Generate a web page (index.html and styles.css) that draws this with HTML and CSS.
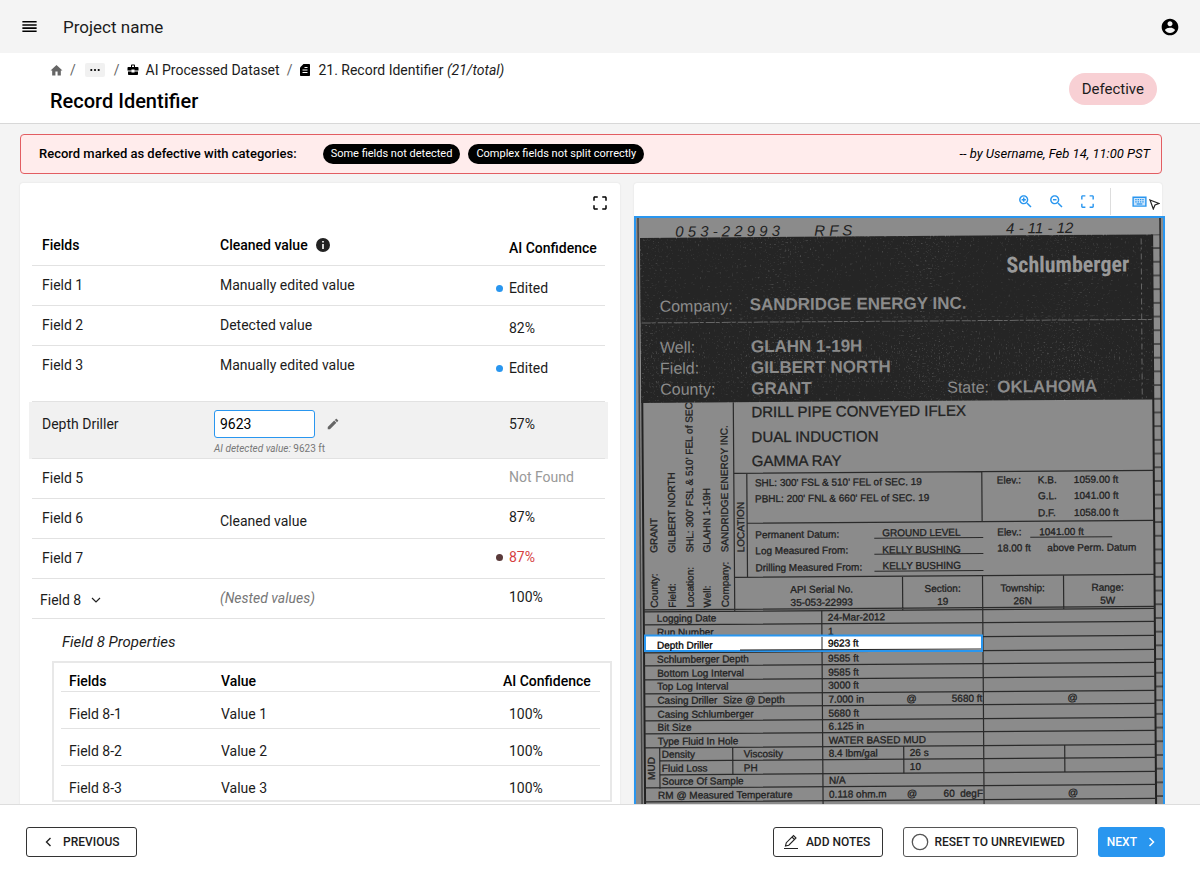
FILE: index.html
```html
<!DOCTYPE html>
<html lang="en">
<head>
    <meta charset="UTF-8">
    <meta name="viewport" content="width=device-width, initial-scale=1.0">
    <title>Record Identifier</title>
    <link rel="stylesheet" href="styles.css">
</head>
<body>
    <header class="topbar">
        <button class="icon-btn" aria-label="Menu">
            <svg width="19" height="19" viewBox="0 0 24 24"><path d="M3 15h18v-2H3v2zm0 4h18v-2H3v2zm0-8h18V9H3v2zm0-6v2h18V5H3z"/></svg>
        </button>
        <span class="project">Project name</span>
        <button class="icon-btn account" aria-label="Account">
            <svg width="20" height="20" viewBox="0 0 24 24"><path d="M12 2C6.480 2 2 6.480 2 12s4.480 10 10 10 10-4.480 10-10S17.520 2 12 2zm0 3c1.660 0 3 1.340 3 3s-1.340 3-3 3-3-1.340-3-3 1.340-3 3-3zm0 14.200c-2.500 0-4.710-1.280-6-3.220.030-1.990 4-3.080 6-3.080 1.990 0 5.970 1.090 6 3.080-1.290 1.940-3.500 3.220-6 3.220z"/></svg>
        </button>
    </header>

    <div class="subheader">
        <div>
            <nav class="breadcrumb" aria-label="Breadcrumb">
                <a href="#" aria-label="Home"><svg class="home" width="13" height="13" viewBox="0 0 24 24"><path d="M10 21v-7h4v7h6v-9h3L12 2 1 12h3v9z"/></svg></a>
                <span class="sep">/</span>
                <button class="more" aria-label="Show more">
                    <svg width="10" height="4" viewBox="0 0 10 4"><circle cx="1.300" cy="2" r="1.100"/><circle cx="5" cy="2" r="1.100"/><circle cx="8.700" cy="2" r="1.100"/></svg>
                </button>
                <span class="sep">/</span>
                <a href="#"><svg width="12" height="12" viewBox="0 0 24 24"><path d="M8 6V3c0-1 .8-2 2-2h4c1.200 0 2 1 2 2v3h5c1.100 0 2 .9 2 2v5h-8v-2H9v2H1V8c0-1.100.9-2 2-2zm2 0h4V3h-4zM2 15h7v2h6v-2h7v5c0 1.100-.9 2-2 2H4c-1.100 0-2-.9-2-2z"/></svg>AI Processed Dataset</a>
                <span class="sep">/</span>
                <a href="#"><svg width="12" height="14" viewBox="0 0 24 26"><path d="M9 1h11c1.100 0 2 .9 2 2v20c0 1.100-.9 2-2 2H4c-1.100 0-2-.9-2-2V8z"/><path d="M7 13h10M7 18h10M11 8h6" stroke="#fff" stroke-width="2"/></svg><span>21. Record Identifier <em>(21/total)</em></span></a>
            </nav>
            <h1>Record Identifier</h1>
        </div>
        <span class="status">Defective</span>
    </div>

    <main>
        <div class="alert">
            <strong>Record marked as defective with categories:</strong>
            <span class="chip">Some fields not detected</span>
            <span class="chip">Complex fields not split correctly</span>
            <em>-- by Username, Feb 14, 11:00 PST</em>
        </div>

        <div class="panels">
            <section class="panel">
                <div class="panel-top">
                    <button class="icon-btn" aria-label="Expand">
                        <svg width="18" height="18" viewBox="0 0 24 24"><path d="M3 5v4h2V5h4V3H5c-1.100 0-2 .9-2 2zm2 10H3v4c0 1.100.9 2 2 2h4v-2H5v-4zm14 4h-4v2h4c1.100 0 2-.9 2-2v-4h-2v4zm0-16h-4v2h4v4h2V5c0-1.100-.9-2-2-2z"/></svg>
                    </button>
                </div>

                <table class="fields">
                    <colgroup><col class="col-name"><col><col class="col-conf"></colgroup>
                    <thead>
                        <tr class="low">
                            <th>Fields</th>
                            <th>Cleaned value <svg class="info" width="16" height="16" viewBox="0 0 24 24"><circle cx="12" cy="12" r="10.500" fill="#222"/><path d="M10.800 6h2.400v2.400h-2.400zM10.800 10.500h2.400V18h-2.400z" fill="#fff"/></svg></th>
                            <th>AI Confidence</th>
                        </tr>
                    </thead>
                    <tbody>
                        <tr class="low"><td>Field 1</td><td>Manually edited value</td><td><i class="dot"></i>Edited</td></tr>
                        <tr class="low"><td>Field 2</td><td>Detected value</td><td>82%</td></tr>
                        <tr class="low last"><td>Field 3</td><td>Manually edited value</td><td><i class="dot"></i>Edited</td></tr>
                        <tr class="active">
                            <td><label for="depth">Depth Driller</label></td>
                            <td>
                                <div class="edit">
                                    <input type="text" id="depth" value="9623">
                                    <svg width="14" height="14" viewBox="0 0 24 24"><path d="M3 17.250V21h3.750L17.810 9.940l-3.750-3.750L3 17.250zM20.710 7.040c.39-.39.39-1.020 0-1.410l-2.340-2.340c-.39-.39-1.020-.39-1.410 0l-1.830 1.830 3.750 3.750 1.830-1.830z"/></svg>
                                </div>
                                <div class="hint"><em>AI detected value:</em> 9623 ft</div>
                            </td>
                            <td>57%</td>
                        </tr>
                        <tr><td>Field 5</td><td></td><td class="muted">Not Found</td></tr>
                        <tr><td>Field 6</td><td class="down">Cleaned value</td><td>87%</td></tr>
                        <tr><td>Field 7</td><td></td><td class="bad"><i class="dot"></i>87%</td></tr>
                        <tr>
                            <td class="nest"><button class="toggle" aria-expanded="true">Field 8 <svg width="10" height="8" viewBox="0 0 10 8"><path d="M1 2l4 4 4-4" fill="none" stroke="#222" stroke-width="1.200"/></svg></button></td>
                            <td class="nested-note">(Nested values)</td>
                            <td>100%</td>
                        </tr>
                    </tbody>
                </table>

                <h2>Field 8 Properties</h2>
                <div class="nested">
                    <table>
                        <colgroup><col class="col-sub"><col><col class="col-subconf"></colgroup>
                        <thead>
                            <tr><th>Fields</th><th>Value</th><th>AI Confidence</th></tr>
                        </thead>
                        <tbody>
                            <tr><td>Field 8-1</td><td>Value 1</td><td>100%</td></tr>
                            <tr><td>Field 8-2</td><td>Value 2</td><td>100%</td></tr>
                            <tr><td>Field 8-3</td><td>Value 3</td><td>100%</td></tr>
                        </tbody>
                    </table>
                </div>
            </section>

            <section class="panel viewer">
                <div class="tools">
                    <button class="icon-btn" aria-label="Zoom in"><svg width="17" height="17" viewBox="0 0 24 24"><path d="M15.500 14h-.79l-.28-.27C15.410 12.590 16 11.110 16 9.500 16 5.910 13.090 3 9.500 3S3 5.910 3 9.500 5.910 16 9.500 16c1.610 0 3.090-.59 4.230-1.570l.27.28v.79l5 4.990L20.490 19l-4.990-5zm-6 0C7.010 14 5 11.990 5 9.500S7.010 5 9.500 5 14 7.010 14 9.500 11.990 14 9.500 14z"/><path d="M12.500 10.500h-2v2h-2v-2h-2v-2h2v-2h2v2h2z"/></svg></button>
                    <button class="icon-btn" aria-label="Zoom out"><svg width="17" height="17" viewBox="0 0 24 24"><path d="M15.500 14h-.79l-.28-.27C15.410 12.590 16 11.110 16 9.500 16 5.910 13.090 3 9.500 3S3 5.910 3 9.500 5.910 16 9.500 16c1.610 0 3.090-.59 4.230-1.570l.27.28v.79l5 4.990L20.490 19l-4.990-5zm-6 0C7.010 14 5 11.990 5 9.500S7.010 5 9.500 5 14 7.010 14 9.500 11.990 14 9.500 14z"/><path d="M7 8.500h5v2H7z"/></svg></button>
                    <button class="icon-btn" aria-label="Fit"><svg width="17" height="17" viewBox="0 0 24 24"><path d="M3 5v4h2V5h4V3H5c-1.100 0-2 .9-2 2zm2 10H3v4c0 1.100.9 2 2 2h4v-2H5v-4zm14 4h-4v2h4c1.100 0 2-.9 2-2v-4h-2v4zm0-16h-4v2h4v4h2V5c0-1.100-.9-2-2-2z"/></svg></button>
                    <span class="divider"></span>
                    <button class="icon-btn keys" aria-label="Keyboard shortcuts">
                        <svg width="17" height="17" viewBox="0 0 24 24"><path d="M3 6h18v12.500H3z" fill="#cfe6fb" stroke="#2996ef" stroke-width="2"/><path d="M6 9.500h12M6 12.500h12" stroke="#2996ef" stroke-width="1.800" stroke-dasharray="2 1.300"/><path d="M8 15.500h8" stroke="#2996ef" stroke-width="1.800"/></svg>
                        <svg class="cursor" width="11" height="11" viewBox="0 0 11 11"><path d="M1 1l9 3.500-4 1.500-1.700 4z" fill="#fff" stroke="#222" stroke-width="1.200"/></svg>
                    </button>
                </div>

                <div class="scan">
                    <svg viewBox="636 218 527 590" role="img" aria-label="Scanned well log header">
                        <defs>
                            <filter id="grain" x="0" y="0" width="100%" height="100%">
                                <feTurbulence type="fractalNoise" baseFrequency="0.6" numOctaves="2" seed="4"/>
                                <feColorMatrix values="0 0 0 0 .5  0 0 0 0 .5  0 0 0 0 .5  5 0 0 0 -2.9"/>
                            </filter>
                            <pattern id="ticks" x="0" y="237" width="12" height="13.700" patternUnits="userSpaceOnUse">
                                <path d="M0 1h12" stroke="#222" stroke-width="1.200"/>
                            </pattern>
                        </defs>
                        <rect x="636" y="218" width="527" height="590" fill="#8b8b8b"/>

                        <g transform="rotate(-.4 636 218)">
                            <!-- page edges -->
                            <path d="M638 210v610" stroke="#444" stroke-width="1.500"/>
                            <path d="M641 238v580M1152 238v580" stroke="#222" stroke-width="2"/>
                            <path d="M1160 215v600" stroke="#222" stroke-width="1.500"/>
                            <rect x="1152" y="238" width="8" height="580" fill="url(#ticks)"/>

                            <!-- title block -->
                            <rect x="640" y="238" width="512" height="165" fill="#252525"/>
                            <rect x="640" y="238" width="512" height="165" filter="url(#grain)" opacity=".25"/>
                            <path d="M641 323h511" stroke="#666" stroke-width="1" stroke-dasharray="9 1 4 2"/>
                            <path d="M641 319h511M641 383h511" stroke="#555" stroke-width=".5" stroke-dasharray="3 4 1 6"/>
                            <path d="M1141 242v160" stroke="#666" stroke-width="1" stroke-dasharray="6 3 2 4"/>

                            <g class="hand">
                                <text x="675" y="237">0 5 3 - 2 2 9 9 3</text>
                                <text x="814" y="237">R F S</text>
                                <text x="1006" y="236">4 - 11 - 12</text>
                            </g>

                            <text class="brand" x="1006" y="275">Schlumberger</text>
                            <g class="label">
                                <text x="659" y="312">Company:</text>
                                <text x="659" y="353">Well:</text>
                                <text x="659" y="374">Field:</text>
                                <text x="659" y="395">County:</text>
                                <text x="946" y="395">State:</text>
                            </g>
                            <g class="value">
                                <text x="749" y="311">SANDRIDGE ENERGY INC.</text>
                                <text x="750" y="353">GLAHN 1-19H</text>
                                <text x="750" y="374">GILBERT NORTH</text>
                                <text x="750" y="395">GRANT</text>
                                <text x="996" y="395">OKLAHOMA</text>
                            </g>

                            <g class="service">
                                <text x="750" y="418">DRILL PIPE CONVEYED IFLEX</text>
                                <text x="750" y="443">DUAL INDUCTION</text>
                                <text x="750" y="467">GAMMA RAY</text>
                            </g>

                            <!-- rules -->
                            <path class="rule" d="M732 403v209M745 474v104M732 474h420M745 524h407M732 578h420M641 610h511M980 474v50M900 578v34M980 578v240M1061 578v34M819 612v206M656 748v41M729 748v27M900 748v27M1061 748v27"/>
                            <path class="rule" d="M641 612h511M641 625h511M641 639h511M641 653h511M641 666h511M641 680h511M641 694h511M641 707h511M641 721h511M641 734h511M641 748h511M656 761h496M656 775h496M641 788h511M641 802h511"/>
                            <path class="rule thin" d="M872 540h109M872 556h109M872 573h109M1028 540h82"/>

                            <g class="small">
                                <text transform="translate(655 608) rotate(-90)">County:</text>
                                <text transform="translate(673 608) rotate(-90)">Field:</text>
                                <text transform="translate(691 608) rotate(-90)">Location:</text>
                                <text transform="translate(708 608) rotate(-90)">Well:</text>
                                <text transform="translate(726 608) rotate(-90)">Company:</text>
                                <text transform="translate(655 553) rotate(-90)">GRANT</text>
                                <text transform="translate(673 553) rotate(-90)">GILBERT NORTH</text>
                                <text transform="translate(691 553) rotate(-90)">SHL: 300' FSL &amp; 510' FEL of SEC</text>
                                <text transform="translate(708 553) rotate(-90)">GLAHN 1-19H</text>
                                <text transform="translate(726 553) rotate(-90)">SANDRIDGE ENERGY INC.</text>
                                <text transform="translate(742 553) rotate(-90)">LOCATION</text>

                                <text x="753" y="487">SHL: 300' FSL &amp; 510' FEL of SEC. 19</text>
                                <text x="753" y="503">PBHL: 200' FNL &amp; 660' FEL of SEC. 19</text>
                                <text x="753" y="539">Permanent Datum:</text>
                                <text x="753" y="555">Log Measured From:</text>
                                <text x="753" y="572">Drilling Measured From:</text>
                                <text x="880" y="538">GROUND LEVEL</text>
                                <text x="880" y="555">KELLY BUSHING</text>
                                <text x="880" y="571">KELLY BUSHING</text>
                                <text x="995" y="486">Elev.:</text>
                                <text x="1036" y="486">K.B.</text>
                                <text x="1036" y="502">G.L.</text>
                                <text x="1036" y="519">D.F.</text>
                                <text x="1072" y="486">1059.00 ft</text>
                                <text x="1072" y="502">1041.00 ft</text>
                                <text x="1072" y="519">1058.00 ft</text>
                                <text x="995" y="538">Elev.:</text>
                                <text x="1037" y="538">1041.00 ft</text>
                                <text x="995" y="554">18.00 ft</text>
                                <text x="1045" y="554">above Perm. Datum</text>

                                <g text-anchor="middle">
                                    <text x="819" y="594">API Serial No.</text>
                                    <text x="819" y="607">35-053-22993</text>
                                    <text x="940" y="594">Section:</text>
                                    <text x="940" y="607">19</text>
                                    <text x="1020" y="594">Township:</text>
                                    <text x="1020" y="607">26N</text>
                                    <text x="1105" y="594">Range:</text>
                                    <text x="1105" y="607">5W</text>
                                </g>

                                <text x="654" y="622">Logging Date</text>
                                <text x="825" y="622">24-Mar-2012</text>
                                <text x="654" y="636">Run Number</text>
                                <text x="825" y="636">1</text>
                                <text x="654" y="663">Schlumberger Depth</text>
                                <text x="825" y="663">9585 ft</text>
                                <text x="654" y="677">Bottom Log Interval</text>
                                <text x="825" y="677">9585 ft</text>
                                <text x="654" y="690">Top Log Interval</text>
                                <text x="825" y="690">3000 ft</text>
                                <text x="654" y="704">Casing Driller&#160; Size @ Depth</text>
                                <text x="825" y="704">7.000 in</text>
                                <text x="903" y="704">@</text>
                                <text x="979" y="704" text-anchor="end">5680 ft</text>
                                <text x="1064" y="704">@</text>
                                <text x="654" y="718">Casing Schlumberger</text>
                                <text x="825" y="718">5680 ft</text>
                                <text x="654" y="731">Bit Size</text>
                                <text x="825" y="731">6.125 in</text>
                                <text x="654" y="745">Type Fluid In Hole</text>
                                <text x="825" y="745">WATER BASED MUD</text>
                                <text transform="translate(651 780) rotate(-90)">MUD</text>
                                <text x="658" y="758">Density</text>
                                <text x="740" y="758">Viscosity</text>
                                <text x="825" y="758">8.4 lbm/gal</text>
                                <text x="906" y="758">26 s</text>
                                <text x="658" y="772">Fluid Loss</text>
                                <text x="740" y="772">PH</text>
                                <text x="906" y="772">10</text>
                                <text x="658" y="785">Source Of Sample</text>
                                <text x="825" y="785">N/A</text>
                                <text x="654" y="799">RM @ Measured Temperature</text>
                                <text x="825" y="799">0.118 ohm.m</text>
                                <text x="903" y="799">@</text>
                                <text x="979" y="799" text-anchor="end">60&#160; degF</text>
                                <text x="1064" y="799">@</text>
                            </g>
                        </g>

                        <!-- selected field -->
                        <rect x="645" y="635.500" width="337" height="15.500" fill="#fff" stroke="#2996ef" stroke-width="2"/>
                        <path d="M822 637v13M740 650l241-1" stroke="#222" stroke-width="1"/>
                        <g class="small picked" transform="rotate(-.4 636 218)">
                            <text x="654" y="649">Depth Driller</text>
                            <text x="825" y="648">9623 ft</text>
                        </g>
                    </svg>
                </div>
            </section>
        </div>
    </main>

    <footer>
        <button class="btn">
            <svg width="7" height="10" viewBox="0 0 7 10"><path d="M5.500 1L1.500 5l4 4" fill="none" stroke="#222" stroke-width="1.400"/></svg>
            PREVIOUS
        </button>
        <button class="btn notes">
            <svg width="16" height="16" viewBox="0 0 16 16" fill="none" stroke="#222" stroke-width="1.100"><path d="M1 14.500h14M2.500 12l.8-3.300L10.500 1.500l2.500 2.500-7.200 7.200zM9 3l2.500 2.500"/></svg>
            ADD NOTES
        </button>
        <button class="btn reset">
            <svg width="18" height="18" viewBox="0 0 18 18"><circle cx="9" cy="9" r="7.700" fill="none" stroke="#555" stroke-width="1.300"/></svg>
            RESET TO UNREVIEWED
        </button>
        <button class="btn next">
            NEXT
            <svg width="7" height="10" viewBox="0 0 7 10"><path d="M1.500 1l4 4-4 4" fill="none" stroke="#fff" stroke-width="1.500"/></svg>
        </button>
    </footer>
</body>
</html>
```

FILE: styles.css
```css
* {
    box-sizing: border-box;
}
body {
    font-family: Roboto, Arial, sans-serif;
    font-size: 14px;
    line-height: 20px;
    color: #1c1c1c;
    background-color: #f4f4f4;
    margin: 0;
    height: 100vh;
    display: flex;
    flex-direction: column;
    overflow: hidden;
}
button {
    font-family: inherit;
    color: inherit;
    cursor: pointer;
}
a {
    color: inherit;
    text-decoration: none;
}
svg {
    display: block;
}
.icon-btn {
    display: flex;
    padding: 0;
    border: none;
    background: none;
}

/* header */
.topbar {
    display: flex;
    align-items: center;
    flex: none;
    height: 53px;
    padding: 0 20px;
}
.project {
    margin-left: 24px;
    font-size: 17px;
}
.account {
    margin-left: auto;
}
.subheader {
    display: flex;
    flex: none;
    justify-content: space-between;
    align-items: center;
    padding: 7px 43px 10px 50px;
    background-color: #fff;
    border-bottom: 1px solid #d8d8d8;
}
.breadcrumb {
    display: flex;
    align-items: center;
    gap: 7px;
}
.breadcrumb a {
    display: flex;
    align-items: center;
    gap: 7px;
}
.breadcrumb .home {
    fill: #666;
}
.sep {
    color: #666;
}
.more {
    display: flex;
    align-items: center;
    justify-content: center;
    width: 20px;
    height: 14px;
    margin: 0 2px;
    padding: 0;
    border: none;
    border-radius: 2px;
    background-color: #f1f1f1;
}
h1 {
    margin: 9px 0 0;
    font-size: 20px;
    line-height: 24px;
    font-weight: 500;
    color: #000;
}
.status {
    margin-top: 4px;
    padding: 6px 13px;
    border-radius: 16px;
    background-color: #f8d0d4;
    font-size: 15px;
}

/* main */
main {
    flex: 1;
    min-height: 0;
    display: flex;
    flex-direction: column;
    padding: 10px 38px 0 20px;
    overflow: hidden;
}
.alert {
    display: flex;
    align-items: center;
    flex: none;
    gap: 8px;
    height: 40px;
    padding: 0 11px 0 18px;
    border: 1px solid #e25d62;
    border-radius: 4px;
    background-color: #ffecec;
    color: #000;
    font-size: 13px;
}
.alert strong {
    margin-right: 18px;
    font-weight: 500;
}
.alert em {
    margin-left: auto;
}
.chip {
    padding: 0 8px;
    border-radius: 10px;
    background-color: #000;
    color: #fff;
    font-size: 11px;
}
.panels {
    flex: 1;
    min-height: 0;
    display: grid;
    grid-template-columns: 600fr 528fr;
    gap: 14px;
    margin-top: 9px;
}
.panel {
    min-width: 0;
    border-radius: 3px 3px 0 0;
    background-color: #fff;
    box-shadow: 0 0 2px rgba(0, 0, 0, 0.1);
}
.panel-top {
    display: flex;
    justify-content: flex-end;
    padding: 11px 11px 14px;
}

/* tables */
table {
    width: 100%;
    table-layout: fixed;
    border-collapse: separate;
    border-spacing: 0;
}
th, td {
    padding: 0;
    text-align: left;
    vertical-align: top;
    border-bottom: 1px solid #e2e2e2;
}
th {
    font-weight: 500;
    color: #000;
}
.fields {
    width: calc(100% - 27px);
    margin: 0 15px 0 12px;
}
.col-name {
    width: 182px;
}
.col-conf {
    width: 109px;
}
.fields th, .fields td {
    height: 40px;
    padding: 9px 0 0 10px;
}
.fields th:nth-child(2), .fields td:nth-child(2) {
    padding-left: 6px;
}
.fields th:nth-child(3), .fields td:nth-child(3) {
    padding: 8px 0 0 13px;
}
.fields .low th:nth-child(3), .fields .low td:nth-child(3) {
    padding-top: 12px;
}
.fields .last td {
    height: 56px;
}
.info {
    display: inline-block;
    vertical-align: -3px;
    margin-left: 4px;
}
.dot {
    display: inline-block;
    width: 7px;
    height: 7px;
    margin: 0 6px 1px -13px;
    border-radius: 50%;
    background-color: #2996ef;
}
.active {
    background-color: #f1f1f1;
    box-shadow: -3px 0 #f1f1f1, 3px 0 #f1f1f1;
}
.fields .active td {
    height: 57px;
    padding-top: 12px;
}
.fields .active td:nth-child(2) {
    padding: 8px 0 0;
}
.edit {
    display: flex;
    align-items: center;
    gap: 11px;
}
.edit input {
    width: 101px;
    height: 28px;
    padding: 0 5px;
    border: 1px solid #2996ef;
    border-radius: 3px;
    background-color: #fff;
    color: #000;
    font: inherit;
}
.edit svg {
    fill: #666;
}
.hint {
    margin-top: 4px;
    font-size: 10px;
    line-height: 14px;
    color: #777;
}
.muted {
    color: #999;
}
.bad {
    color: #d63f3f;
}
.bad .dot {
    background-color: #5a3a3a;
}
.fields .down {
    padding-top: 12px;
}
.fields .nest {
    padding: 11px 0 0 8px;
}
.toggle {
    display: flex;
    align-items: center;
    gap: 10px;
    padding: 0;
    border: none;
    background: none;
    font-size: 14px;
    line-height: 20px;
}
.nested-note {
    font-style: italic;
    color: #777;
}
h2 {
    margin: 13px 0 9px 42px;
    font-size: 15px;
    line-height: 20px;
    font-weight: 400;
    font-style: italic;
}
.nested {
    margin: 0 8px 0 32px;
    padding: 8px 10px 0 7px;
    border: 2px solid #e8e8e8;
}
.col-sub {
    width: 152px;
}
.col-subconf {
    width: 97px;
}
.nested th {
    height: 21px;
    padding-left: 8px;
}
.nested td {
    height: 37px;
    padding: 12px 0 0 8px;
}
.nested th:nth-child(3) {
    padding-left: 0;
}
.nested td:nth-child(3) {
    padding-left: 6px;
}
.nested tr:last-child td {
    height: 34px;
    border-bottom: none;
}
.nested thead tr:last-child th {
    border-bottom: 1px solid #e2e2e2;
}

/* document viewer */
.viewer {
    display: flex;
    flex-direction: column;
}
.tools {
    display: flex;
    align-items: center;
    flex: none;
    gap: 14px;
    height: 33px;
    padding: 4px 2px 0 0;
    justify-content: flex-end;
}
.tools svg {
    fill: #2996ef;
}
.divider {
    width: 1px;
    height: 27px;
    margin-right: 6px;
    background-color: #ddd;
}
.keys {
    align-items: flex-end;
    gap: 1px;
}
.scan {
    flex: 1;
    min-height: 0;
    margin-right: -3px;
    border: 2px solid #2996ef;
    border-bottom: none;
    background-color: #8b8b8b;
    overflow: hidden;
}
.scan svg {
    width: 100%;
}
.scan text {
    font-family: "Liberation Sans", Arial, sans-serif;
    fill: #222;
}
.scan .hand text {
    font-size: 15px;
    font-style: italic;
}
.scan .brand {
    font-family: "Roboto Condensed", Roboto, sans-serif;
    font-size: 22px;
    font-weight: 700;
    fill: #999;
}
.scan .label text {
    font-size: 16px;
    fill: #8b8b8b;
}
.scan .value text {
    font-size: 17px;
    font-weight: 700;
    fill: #8b8b8b;
}
.scan .service text {
    font-size: 15px;
    stroke: #222;
    stroke-width: 0.3px;
}
.scan .small text {
    font-size: 10px;
    stroke: #222;
    stroke-width: 0.3px;
}
.scan .picked text {
    fill: #000;
    stroke: #000;
}
.rule {
    fill: none;
    stroke: #2a2a2a;
    stroke-width: 1.2;
}
.thin {
    stroke-width: 1;
}

/* footer */
footer {
    display: flex;
    align-items: center;
    flex: none;
    gap: 20px;
    height: 75px;
    padding: 0 35px 0 26px;
    border-top: 1px solid #ddd;
    background-color: #fff;
}
.btn {
    display: flex;
    align-items: center;
    gap: 11px;
    height: 30px;
    padding: 0 16px 0 18px;
    border: 1px solid #333;
    border-radius: 3px;
    background-color: #fff;
    font-size: 12px;
    font-weight: 500;
}
.notes {
    gap: 7px;
    margin-left: auto;
    padding: 0 12px 0 9px;
}
.reset {
    gap: 5px;
    padding: 0 12px 0 7px;
    border-color: #555;
}
.next {
    padding: 0 9px 0 8px;
    border-color: #2996ef;
    background-color: #2996ef;
    color: #fff;
}
```
